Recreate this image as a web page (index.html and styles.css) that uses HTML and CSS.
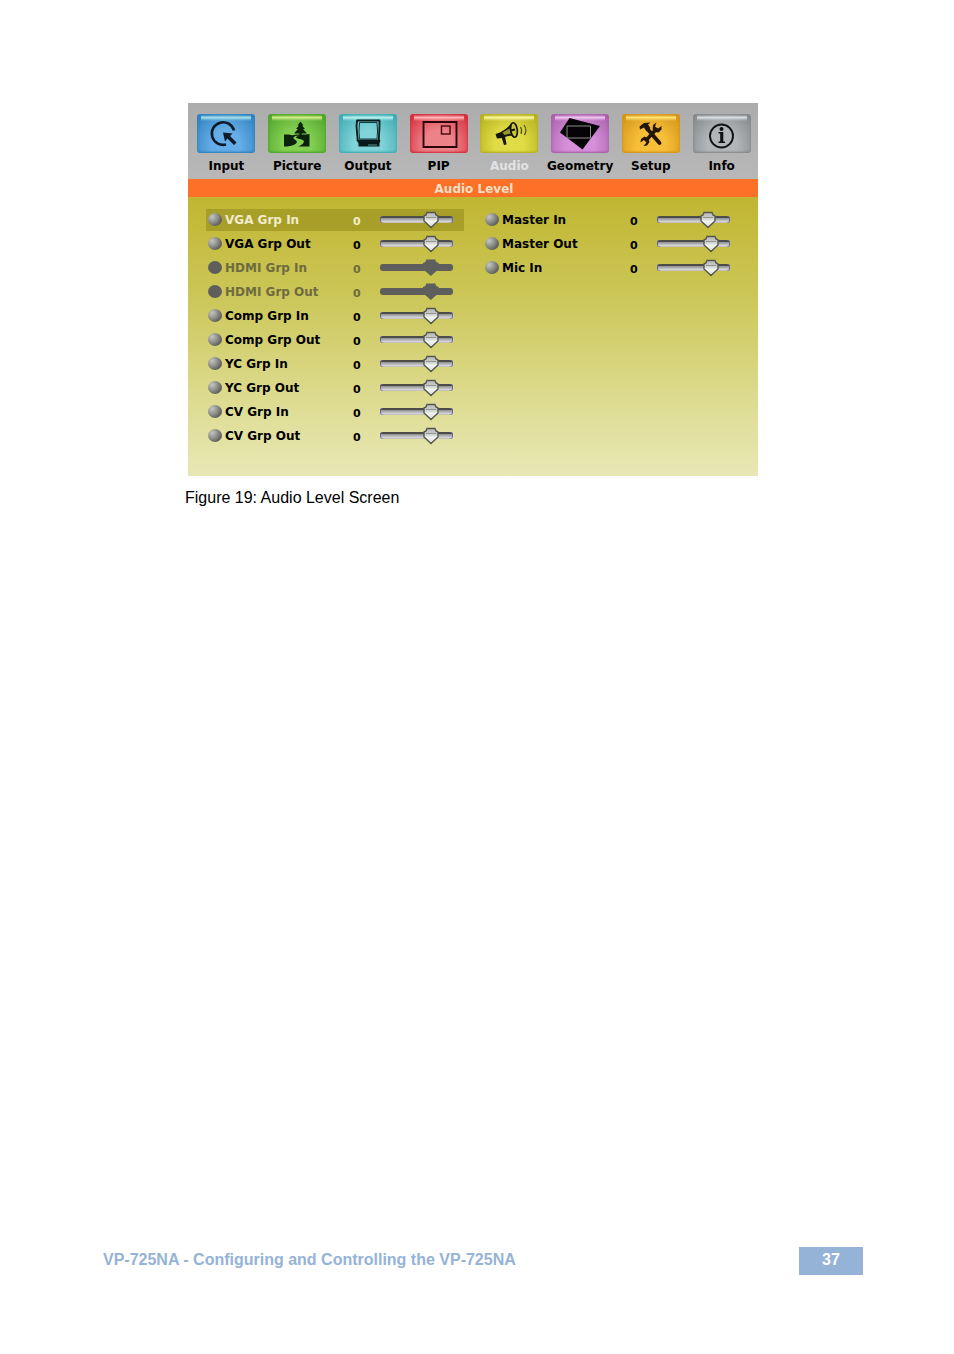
FILE: index.html
```
<!DOCTYPE html>
<html lang="en">
<head>
<meta charset="utf-8">
<title>VP-725NA - Audio Level Screen</title>
<link rel="stylesheet" href="styles.css">
</head>
<body>
<div class="page">
  <main class="content">
    <figure class="figure">
      <div class="osd">
        <nav class="menu" aria-label="Main menu">
          <button class="menu-item" type="button">
            <span class="tile tile-blue"><svg viewBox="0 0 58 39" aria-hidden="true"><path d="M37 16.500A11.300 11.300 0 1 0 29 30.500" fill="none" stroke="#0c1a2a" stroke-width="2.600"/><path d="M26 18.500 35.500 19.500 33 22 39.500 28.500 37 31 30.500 24.500 28 27.500Z" fill="#0c1a2a"/></svg></span>
            <span class="menu-label">Input</span>
          </button>
          <button class="menu-item" type="button">
            <span class="tile tile-green"><svg viewBox="0 0 58 39" aria-hidden="true"><path d="M32.500 7.500 35.500 11.500H34L37 15H35L39 19.500H33.700V22H31.400V19.500H26L30 15H28L31 11.500H29.500Z" fill="#0b220c"/><path d="M16 20.500H21C25 22 27 20.500 31 20.500 35 20.800 38 20.500 41.500 20V32.500H30C34 31 37 28.500 35.500 26.500 33.500 24.800 29 25 28 23.500 27.500 22.800 30 22 30.500 21.500 26 22 24.500 23.500 26 25 29 27 30 28 27.500 30 24.500 32 20 32.500 16 32.500Z" fill="#0b220c"/></svg></span>
            <span class="menu-label">Picture</span>
          </button>
          <button class="menu-item" type="button">
            <span class="tile tile-cyan"><svg viewBox="0 0 58 39" aria-hidden="true"><path d="M18 6.500H40.500V12L39.800 26.500H18.700L17.500 12Z" fill="none" stroke="#07191b" stroke-width="1.800" stroke-linejoin="round"/><path d="M20.500 8.500H38L38.500 17 38 25H20.500L20 17Z" fill="none" stroke="#12383b" stroke-width="1"/><path d="M17.500 26H41.500L40.500 29.500V32.500H19.500V29.500Z" fill="#07191b"/><path d="M29 31H38" stroke="#54999d" stroke-width="1"/></svg></span>
            <span class="menu-label">Output</span>
          </button>
          <button class="menu-item" type="button">
            <span class="tile tile-red"><svg viewBox="0 0 58 39" aria-hidden="true"><path d="M13.500 8H46.500V33H13.500Z" fill="none" stroke="#2b0507" stroke-width="1.900"/><path d="M31.500 12H40V20H31.500Z" fill="none" stroke="#4a1015" stroke-width="1.500"/></svg></span>
            <span class="menu-label">PIP</span>
          </button>
          <button class="menu-item active" type="button" aria-current="page">
            <span class="tile tile-yellow"><svg viewBox="0 0 58 39" aria-hidden="true"><path d="M15.500 20 20 18.500C25 16 29 13 31.500 8.500L36 22.500C32 21 27 22 22.500 24L17 24.500Z" fill="#15150a"/><path d="M22.500 18.500 29.500 14.500 31 19.500 24.500 21Z" fill="#96942c"/><ellipse cx="34" cy="16" rx="3.300" ry="7.300" transform="rotate(-8 34 16)" fill="#c9c63a" stroke="#15150a" stroke-width="1.700"/><path d="M30.500 16.500 35 15.500" stroke="#15150a" stroke-width="2"/><path d="M21.500 23 25 22.500 26.500 30.500 24 31Z" fill="#15150a"/><path d="M40.500 13Q42.500 16 41 20M44 11Q47.500 16 44.500 21" fill="none" stroke="#47471a" stroke-width="1.100"/></svg></span>
            <span class="menu-label">Audio</span>
          </button>
          <button class="menu-item" type="button">
            <span class="tile tile-violet"><svg viewBox="0 0 58 39" aria-hidden="true"><path d="M18.500 4 49 12 31.500 35.500 9 18.500Z" fill="#050305"/><path d="M16 12H39.500V24H16Z" fill="none" stroke="#8b8f84" stroke-width="1"/></svg></span>
            <span class="menu-label">Geometry</span>
          </button>
          <button class="menu-item" type="button">
            <span class="tile tile-orange"><svg viewBox="0 0 58 39" aria-hidden="true"><path d="M25.500 15 37.500 29" stroke="#241605" stroke-width="3.800" stroke-linecap="round"/><path d="M18 15.500 17.500 12.500 22 9 28.500 8.500 26 10.500 28.500 14 24.500 17.500 22 13.500Z" fill="#241605"/><path d="M34 15.500 23.500 27" stroke="#241605" stroke-width="3.400"/><path d="M34.500 8.500 33 12.500 36 14.500 39.500 12 39.500 15.500 36.500 18.500 32.500 18 30.500 15.500 31 11Z" fill="#241605"/><path d="M26.500 24.500 27.500 28 25 31.500 21.500 32 24.500 28.500 22 26 18.500 28.500 19 25 22.500 22.500Z" fill="#241605"/></svg></span>
            <span class="menu-label">Setup</span>
          </button>
          <button class="menu-item" type="button">
            <span class="tile tile-grey"><svg viewBox="0 0 58 39" aria-hidden="true"><circle cx="28.500" cy="22" r="11.500" fill="none" stroke="#111" stroke-width="1.900"/><circle cx="28.500" cy="15" r="2" fill="#111"/><path d="M25.500 18H30.300V27.500H32V29H25.500V27.500H27.200V19.500H25.500Z" fill="#111"/></svg></span>
            <span class="menu-label">Info</span>
          </button>
        </nav>
        <h1 class="title">Audio Level</h1>
        <div class="panel">
          <div class="column">
            <div class="row selected"><span class="ball"></span><label for="vga-in">VGA Grp In</label><output for="vga-in">0</output><input id="vga-in" type="range" min="-76" max="24" value="0"></div>
            <div class="row"><span class="ball"></span><label for="vga-out">VGA Grp Out</label><output for="vga-out">0</output><input id="vga-out" type="range" min="-76" max="24" value="0"></div>
            <div class="row disabled"><span class="ball"></span><label for="hdmi-in">HDMI Grp In</label><output for="hdmi-in">0</output><input id="hdmi-in" type="range" min="-76" max="24" value="0" disabled></div>
            <div class="row disabled"><span class="ball"></span><label for="hdmi-out">HDMI Grp Out</label><output for="hdmi-out">0</output><input id="hdmi-out" type="range" min="-76" max="24" value="0" disabled></div>
            <div class="row"><span class="ball"></span><label for="comp-in">Comp Grp In</label><output for="comp-in">0</output><input id="comp-in" type="range" min="-76" max="24" value="0"></div>
            <div class="row"><span class="ball"></span><label for="comp-out">Comp Grp Out</label><output for="comp-out">0</output><input id="comp-out" type="range" min="-76" max="24" value="0"></div>
            <div class="row"><span class="ball"></span><label for="yc-in">YC Grp In</label><output for="yc-in">0</output><input id="yc-in" type="range" min="-76" max="24" value="0"></div>
            <div class="row"><span class="ball"></span><label for="yc-out">YC Grp Out</label><output for="yc-out">0</output><input id="yc-out" type="range" min="-76" max="24" value="0"></div>
            <div class="row"><span class="ball"></span><label for="cv-in">CV Grp In</label><output for="cv-in">0</output><input id="cv-in" type="range" min="-76" max="24" value="0"></div>
            <div class="row"><span class="ball"></span><label for="cv-out">CV Grp Out</label><output for="cv-out">0</output><input id="cv-out" type="range" min="-76" max="24" value="0"></div>
          </div>
          <div class="column">
            <div class="row"><span class="ball"></span><label for="master-in">Master In</label><output for="master-in">0</output><input id="master-in" type="range" min="-76" max="24" value="0"></div>
            <div class="row"><span class="ball"></span><label for="master-out">Master Out</label><output for="master-out">0</output><input id="master-out" type="range" min="-82" max="18" value="0"></div>
            <div class="row"><span class="ball"></span><label for="mic-in">Mic In</label><output for="mic-in">0</output><input id="mic-in" type="range" min="-82" max="18" value="0"></div>
          </div>
        </div>
      </div>
      <figcaption class="caption">Figure 19: Audio Level Screen</figcaption>
    </figure>
  </main>
  <footer class="footer">
    <span class="footer-title">VP-725NA - Configuring and Controlling the VP-725NA</span>
    <span class="page-number">37</span>
  </footer>
</div>
</body>
</html>
```
FILE: styles.css
```
* { box-sizing: border-box; }

body {
  margin: 0;
  background: #fff;
  color: #000;
  font-family: "Liberation Sans", Arial, sans-serif;
}

.page {
  display: flex;
  flex-direction: column;
  min-height: 100vh;
  padding: 103px 91px 79px 103px;
}

.figure {
  max-width: 573px;
  margin: 0 0 40px 82px;
}

.osd {
  margin-left: 3px;
  background: #b5b5b5;
  font-family: "DejaVu Sans", Verdana, sans-serif;
  font-size: 12px;
  font-weight: 700;
}

.menu {
  display: grid;
  grid-template-columns: repeat(8, 1fr);
  padding: 11px 1px 4px 3px;
  background: linear-gradient(#acacac, #b8b8b8);
}

.menu-item {
  display: flex;
  flex-direction: column;
  align-items: center;
  gap: 5px;
  padding: 0;
  border: 0;
  background: none;
  color: #000;
  font: inherit;
  line-height: 17px;
}

.menu-item.active { color: #e2e2e2; }

.tile {
  width: 58px;
  height: 39px;
  border-radius: 3px;
  --edge: #777;
  --mid: #aaa;
  --shine: #ddd;
  background:
    linear-gradient(transparent, var(--shine) 40%, transparent) 50% 1px / 50px 6px no-repeat,
    radial-gradient(ellipse at 50% 80%, var(--mid) 35%, transparent 95%),
    var(--edge);
  box-shadow: inset 0 0 3px var(--edge), inset 0 -1px 2px var(--edge);
}

.tile svg { display: block; width: 100%; height: 100%; }

.tile-blue { --edge: #2f80bf; --mid: #64ade6; --shine: #a5e0e8; }
.tile-green { --edge: #4fa52c; --mid: #83cf51; --shine: #d4ec8a; }
.tile-cyan { --edge: #3eabb3; --mid: #80d3d7; --shine: #b5f0ee; }
.tile-red { --edge: #d52f3c; --mid: #ee8289; --shine: #ffb9bb; }
.tile-yellow { --edge: #b5b01f; --mid: #dfdc45; --shine: #f8f7a0; }
.tile-violet { --edge: #a960aa; --mid: #d78fdb; --shine: #f0c4f0; }
.tile-orange { --edge: #d2941a; --mid: #f7be38; --shine: #ffe476; }
.tile-grey { --edge: #85888b; --mid: #b3b6b9; --shine: #dcdfe1; }

.title {
  margin: 0;
  padding: 2px 0 0 2px;
  background: #fc7127;
  color: #f3dfc6;
  font-size: 12px;
  line-height: 16px;
  text-align: center;
}

.panel {
  display: grid;
  grid-template-columns: 1fr 1fr;
  gap: 19px;
  padding: 12px 17px 29px 18px;
  background: linear-gradient(#c1b631, #cbc657 35%, #dcda8c 70%, #e8e8b6);
}

.column {
  display: flex;
  flex-direction: column;
  gap: 2px;
}

.row {
  display: flex;
  align-items: center;
  height: 22px;
  padding: 0 11px 0 2px;
}

.row.selected {
  background: #a89f28;
  color: #f1edcb;
}

.row.disabled { color: #6e6b40; }

.row label { flex: 1; margin-left: 3px; white-space: nowrap; }

.row output { width: 27px; padding-top: 2px; font-size: 11px; }

.ball {
  width: 14px;
  height: 13px;
  margin-bottom: 1px;
  border-radius: 50%;
  background: radial-gradient(circle at 30% 30%, #c4c6c0, #8f908c 40%, #5b5c57 75%, #4c4d48);
}

.disabled .ball { background: #5e5f5c; }

input[type="range"] {
  appearance: none;
  -webkit-appearance: none;
  width: 73px;
  height: 18px;
  margin: 0 0 2px;
  background: none;
}

input[type="range"]::-webkit-slider-runnable-track {
  height: 7px;
  border-radius: 3px;
  background: linear-gradient(#4c4c48 0 30%, #8f908f 31%, #dcdce0 85%, #aaa9a0);
  box-shadow: inset 1px 0 0 #6560a8, inset -1px 0 0 #6560a8;
}

input[type="range"]::-webkit-slider-thumb {
  -webkit-appearance: none;
  width: 18px;
  height: 18px;
  margin-top: -5px;
  background: url("data:image/svg+xml,%3Csvg xmlns='http://www.w3.org/2000/svg' viewBox='0 0 18 18'%3E%3ClinearGradient id='g' x2='0' y2='1'%3E%3Cstop stop-color='%23bbb'/%3E%3Cstop offset='.35' stop-color='%23c8cac8'/%3E%3Cstop offset='.6' stop-color='%23f2f4f0'/%3E%3Cstop offset='1' stop-color='%23d8dcd4'/%3E%3C/linearGradient%3E%3Cpath d='M5 1.500H13L14 4 16 5V10L9 16.500 2 10V5L4 4Z' fill='url(%23g)' stroke='%2355564f' stroke-width='1.400'/%3E%3Cpath d='M4 6.500H14' stroke='%23949690'/%3E%3C/svg%3E") center / 18px 18px no-repeat;
}

.disabled input[type="range"]::-webkit-slider-runnable-track {
  background: #5e5f5c;
  box-shadow: none;
}

.disabled input[type="range"]::-webkit-slider-thumb {
  background: #5e5f5c;
  clip-path: polygon(25% 5%, 75% 5%, 80% 20%, 94% 25%, 94% 58%, 50% 97%, 6% 58%, 6% 25%, 20% 20%);
}

.caption {
  margin-top: 12px;
  font-size: 16px;
  line-height: 20px;
}

.footer {
  display: flex;
  align-items: center;
  justify-content: space-between;
  margin-top: auto;
  color: #95b3d7;
  font-size: 16px;
  font-weight: 700;
  line-height: 26px;
}

.footer-title { padding-bottom: 2px; }

.page-number {
  width: 64px;
  padding-bottom: 2px;
  background: #95b3d7;
  color: #fff;
  text-align: center;
}
```
